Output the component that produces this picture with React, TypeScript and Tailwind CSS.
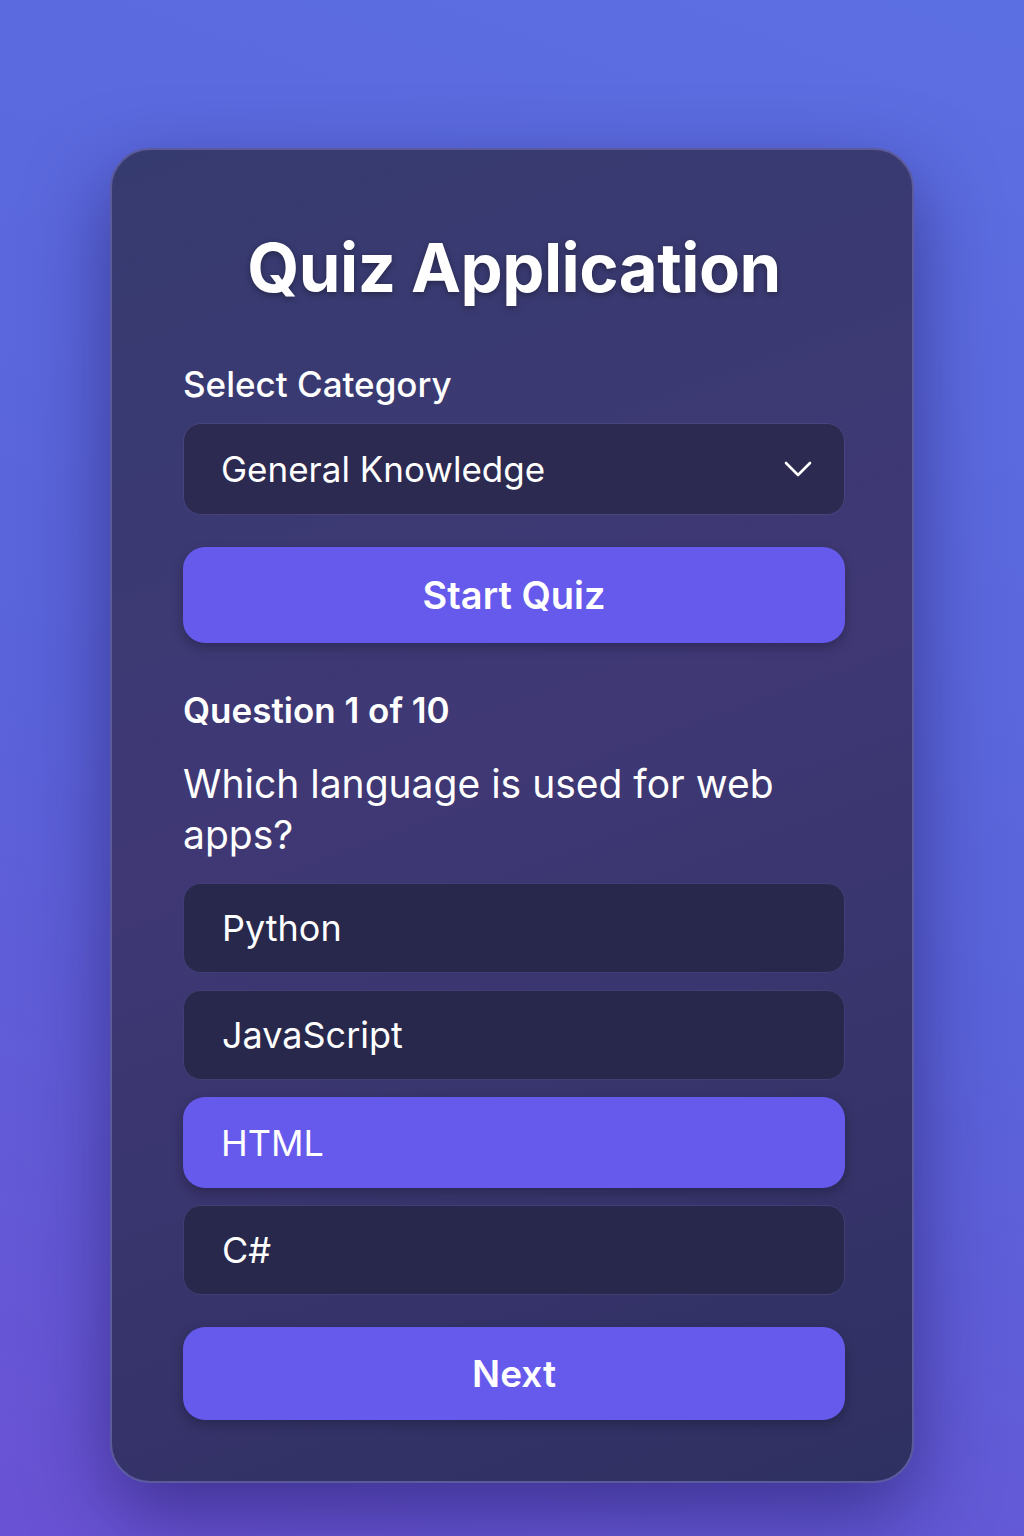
import React from "react";

export default function App() {
  const options = ["Python", "JavaScript", "HTML", "C#"];
  return (
    <div
      className="w-[1024px] h-[1536px] flex justify-center pt-[148px] bg-[linear-gradient(20deg,#6a52d4_0%,#5a63da_45%,#5c6fe2_100%)]"
      style={{ fontFamily: "Inter, 'Noto Sans', sans-serif" }}
    >
      <div className="w-[804px] h-[1335px] rounded-[40px] border-2 border-[#5b5a9c] bg-[linear-gradient(160deg,#363b6f_0%,#3f3875_45%,#2f3062_100%)] shadow-[0_30px_80px_rgba(30,20,90,0.55)] pl-[71px] pr-[67px] pt-[76px] flex flex-col text-white">
        <h1 className="text-center text-[67px] font-bold leading-[84px] tracking-[-0.5px] [text-shadow:0_2px_6px_rgba(0,0,0,0.35)]">
          Quiz Application
        </h1>
        <div className="mt-[52px] text-[35px] font-medium leading-[44px]">Select Category</div>
        <div className="mt-[17px] h-[92px] rounded-[18px] border border-[#47447e] bg-[#2c2a50] flex items-center justify-between pl-[37px] pr-[32px]">
          <span className="text-[35px] leading-[42px]">General Knowledge</span>
          <svg width="28" height="16" viewBox="0 0 28 16" fill="none" stroke="white" strokeWidth="2.6" strokeLinecap="round" strokeLinejoin="round">
            <path d="M2 2l12 12 12-12" />
          </svg>
        </div>
        <button className="mt-[32px] h-[96px] rounded-[22px] bg-[#665aec] text-[38px] font-semibold leading-[44px] shadow-[0_4px_12px_rgba(0,0,0,0.25)]">
          Start Quiz
        </button>
        <div className="mt-[45px] text-[35px] font-semibold leading-[44px]">Question 1 of 10</div>
        <div className="mt-[26px] text-[39px] leading-[51px]">Which language is used for web apps?</div>
        <div className="mt-[23px] flex flex-col gap-[17px]">
          {options.map((o) =>
            o === "HTML" ? (
              <div key={o} className="h-[91px] rounded-[22px] bg-[#665aec] flex items-center pl-[38px] text-[36px] leading-[42px] shadow-[0_4px_12px_rgba(0,0,0,0.25)]">
                {o}
              </div>
            ) : (
              <div key={o} className="h-[90px] rounded-[18px] border border-[#403e74] bg-[#28284c] flex items-center pl-[38px] text-[36px] leading-[42px]">
                {o}
              </div>
            )
          )}
        </div>
        <button className="mt-[32px] h-[93px] rounded-[22px] bg-[#665aec] text-[37px] font-semibold leading-[44px] shadow-[0_4px_12px_rgba(0,0,0,0.25)]">
          Next
        </button>
      </div>
    </div>
  );
}
